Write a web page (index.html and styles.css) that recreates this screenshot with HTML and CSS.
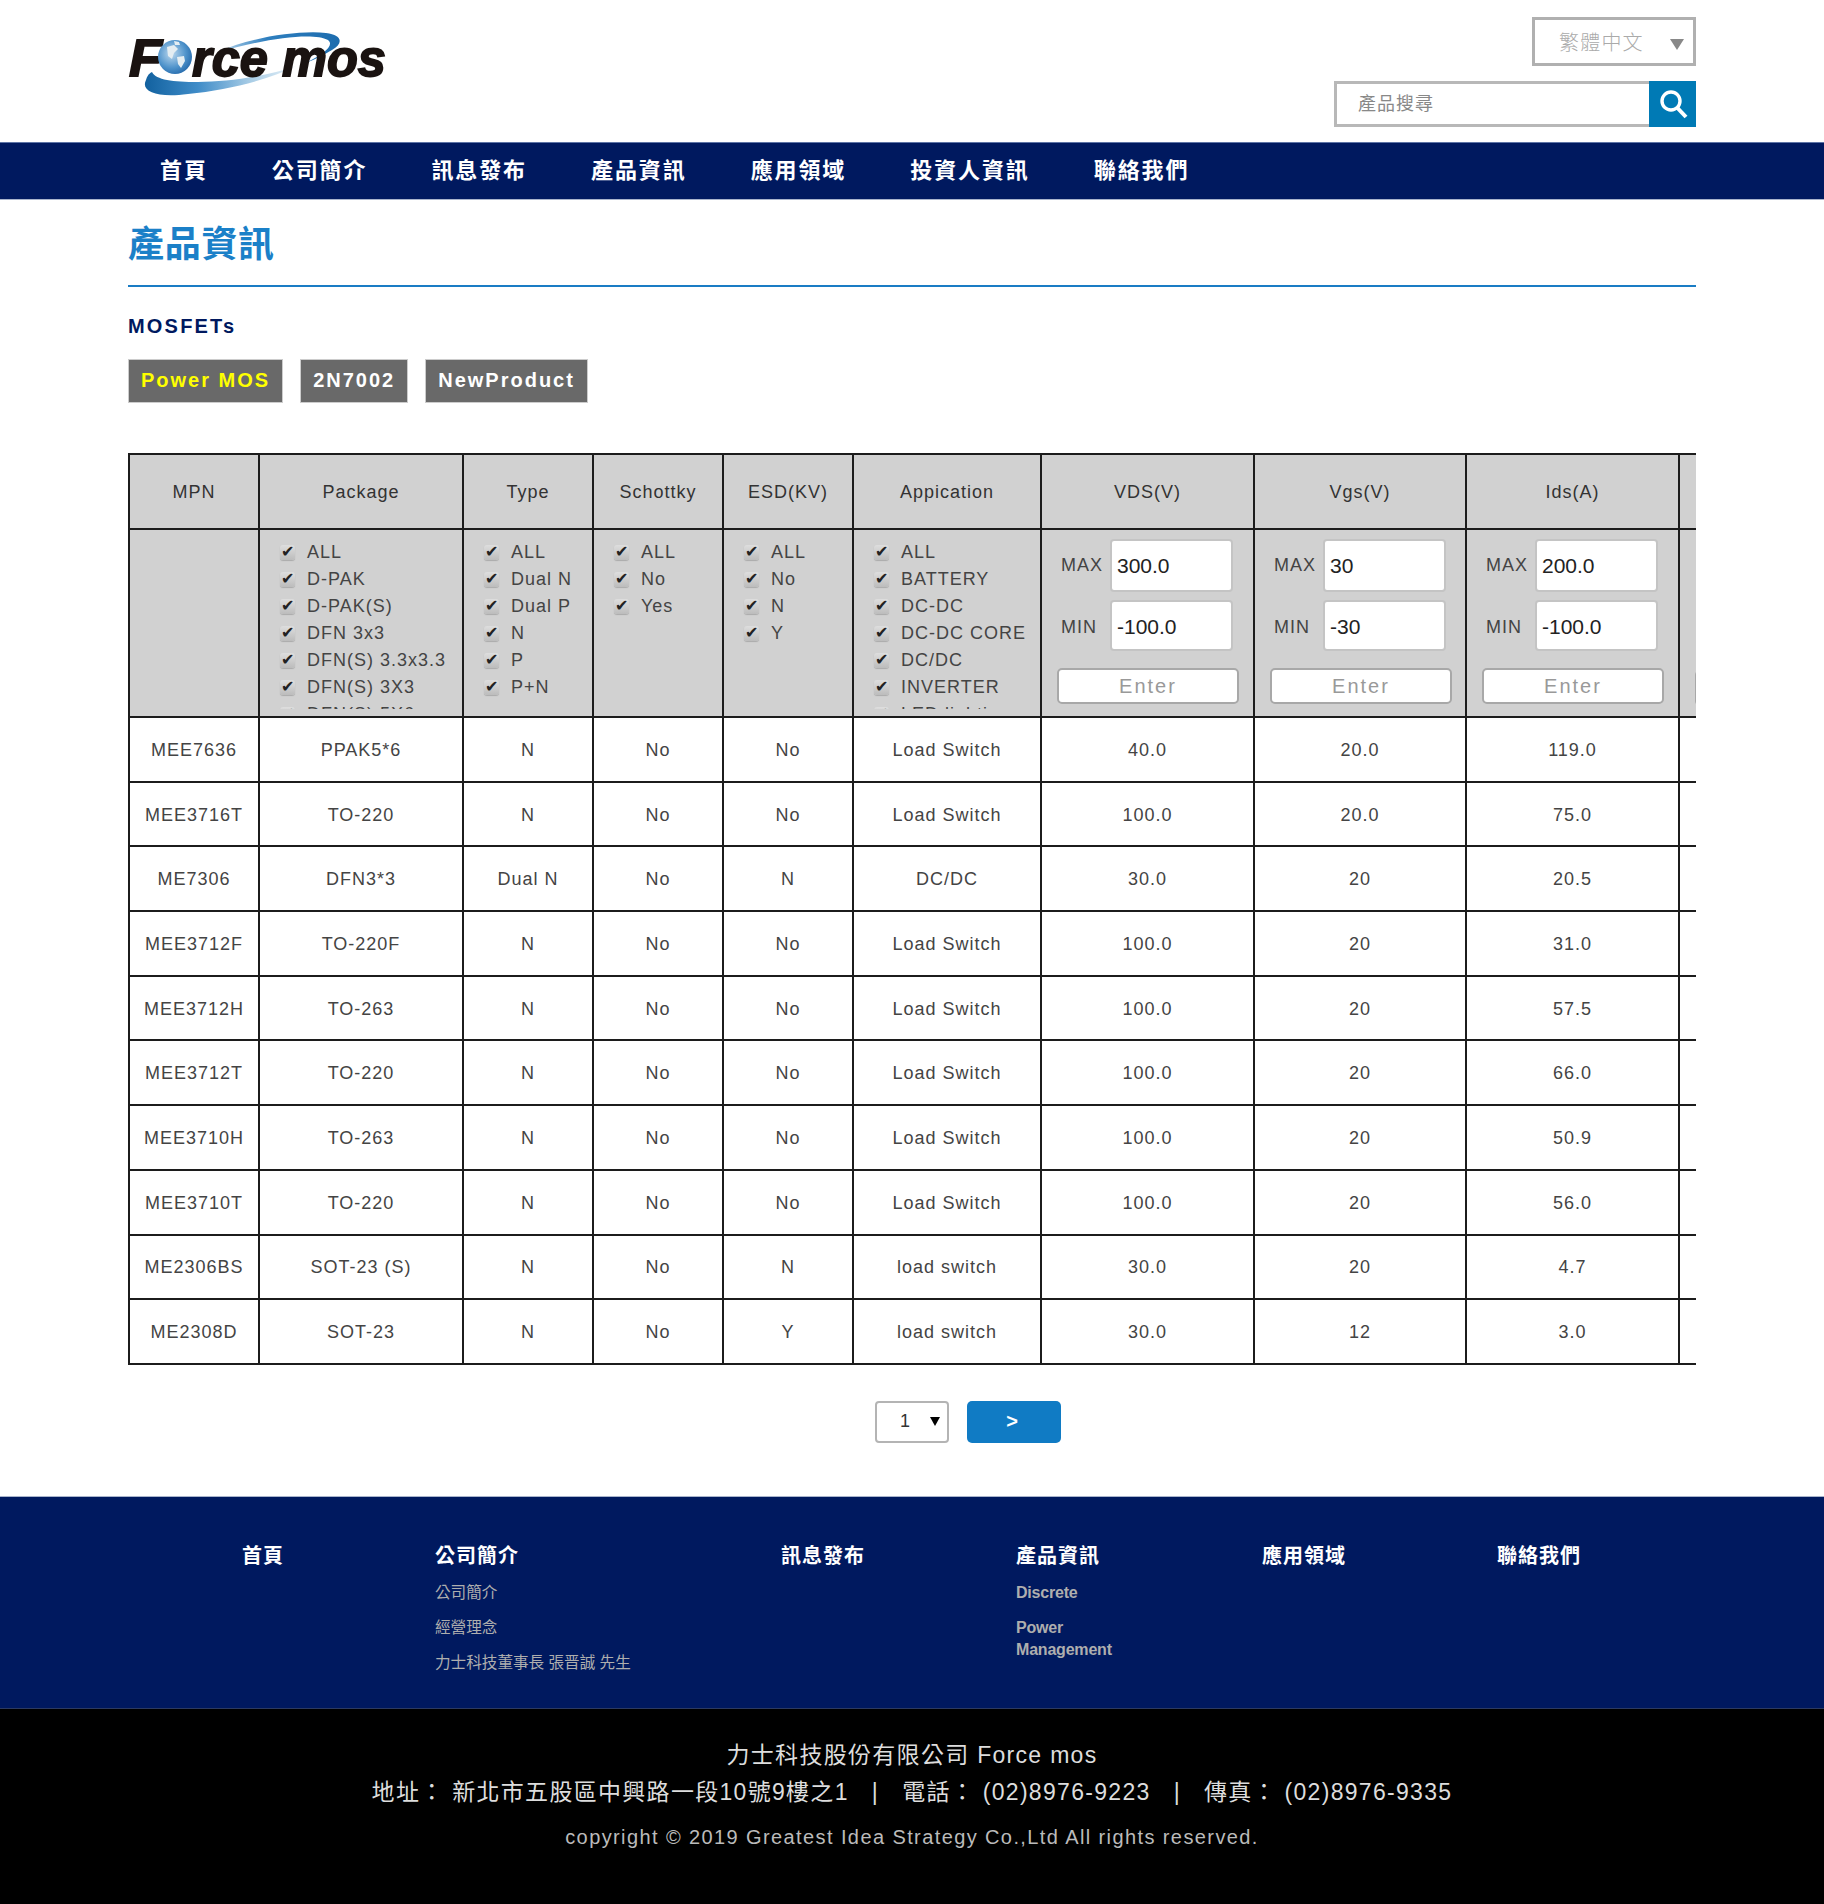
FILE: index.html
```html
<!DOCTYPE html>
<html lang="zh-Hant">
  <head>
    <meta charset="UTF-8" />
    <meta name="viewport" content="width=device-width, initial-scale=1.0" />
    <title>產品資訊 - Force mos</title>
    <link rel="stylesheet" href="styles.css">
  </head>
  <body>
    <header class="wrap top">
      <a class="logo" href="#">
        <svg width="268" height="72" viewBox="0 0 268 72" xmlns="http://www.w3.org/2000/svg">
          <defs>
            <linearGradient id="swoosh" x1="0" y1="0" x2="1" y2="0">
              <stop offset="0" stop-color="#12619f" />
              <stop offset="0.35" stop-color="#3f8cc8" />
              <stop offset="0.7" stop-color="#a9cde6" />
              <stop offset="1" stop-color="#e6f1f8" />
            </linearGradient>
            <linearGradient id="swooshTop" x1="0" y1="0" x2="1" y2="0">
              <stop offset="0" stop-color="#bcd8ec" />
              <stop offset="0.4" stop-color="#2f7fbf" />
              <stop offset="1" stop-color="#1c6cae" />
            </linearGradient>
            <radialGradient id="globe" cx="0.4" cy="0.4" r="0.7">
              <stop offset="0" stop-color="#bcd8ee" />
              <stop offset="0.6" stop-color="#4f93cb" />
              <stop offset="1" stop-color="#1e63a6" />
            </radialGradient>
          </defs>
          <path d="M18 50 C12 62 30 68 60 64 C100 60 140 50 168 36 C140 46 100 52 70 52 C45 52 28 50 24 42 C20 44 19 47 18 50 Z" fill="url(#swoosh)" />
          <path d="M90 22 C120 8 170 0 198 3 C214 5 216 13 204 20 C196 25 185 30 178 33 C195 24 207 16 200 10 C185 2 140 8 90 22 Z" fill="url(#swooshTop)" />
          <text class="logo-text" x="1" y="46" textLength="33" lengthAdjust="spacingAndGlyphs">F</text>
          <text class="logo-text" x="64" y="46" textLength="194" lengthAdjust="spacingAndGlyphs">rce mos</text>
          <circle cx="47" cy="27" r="17" fill="url(#globe)" />
          <path d="M39 17 l7 -2 4 4 -4 4 -2 6 -4 -3 z M49 27 l7 -1 1 5 -4 7 -3 -4 z M46 11 l5 1 1 3 -5 0 z" fill="#e4edf2" />
        </svg>
      </a>
      <div class="top-tools">
        <div class="lang-select">
          <span>繁體中文</span>
          <i class="lang-arrow"></i>
        </div>
        <form class="search">
          <input class="search-input" type="text" placeholder="產品搜尋" />
          <button class="search-btn" type="button" aria-label="search">
            <svg width="32" height="32" viewBox="0 0 32 32" xmlns="http://www.w3.org/2000/svg">
              <circle cx="14" cy="13" r="9" fill="none" stroke="#fff" stroke-width="3.4" />
              <path d="M20.5 20 L29 29" stroke="#fff" stroke-width="4" fill="none" />
            </svg>
          </button>
        </form>
      </div>
    </header>

    <nav class="main-nav">
      <div class="wrap nav-list">
        <a href="#">首頁</a>
        <a href="#">公司簡介</a>
        <a href="#">訊息發布</a>
        <a href="#">產品資訊</a>
        <a href="#">應用領域</a>
        <a href="#">投資人資訊</a>
        <a href="#">聯絡我們</a>
      </div>
    </nav>

    <main class="wrap">
      <h1 class="page-title">產品資訊</h1>
      <h2 class="sub-title">MOSFETs</h2>
      <div class="tabs">
        <a class="tab active" href="#">Power MOS</a>
        <a class="tab" href="#">2N7002</a>
        <a class="tab" href="#">NewProduct</a>
      </div>

      <div class="table-box">
        <table class="product-table">
          <colgroup>
            <col class="col-130" />
            <col class="col-204" />
            <col class="col-130" />
            <col class="col-130" />
            <col class="col-130" />
            <col class="col-188" />
            <col class="col-213" />
            <col class="col-212" />
            <col class="col-213" />
            <col class="col-213" />
          </colgroup>
          <thead>
            <tr class="head-row">
              <th>MPN</th>
              <th>Package</th>
              <th>Type</th>
              <th>Schottky</th>
              <th>ESD(KV)</th>
              <th>Appication</th>
              <th>VDS(V)</th>
              <th>Vgs(V)</th>
              <th>Ids(A)</th>
              <th></th>
            </tr>
            <tr class="filter-row">
              <th></th>
              <th>
                <div class="check-list">
                  <label><input type="checkbox" checked />ALL</label>
                  <label><input type="checkbox" checked />D-PAK</label>
                  <label><input type="checkbox" checked />D-PAK(S)</label>
                  <label><input type="checkbox" checked />DFN 3x3</label>
                  <label><input type="checkbox" checked />DFN(S) 3.3x3.3</label>
                  <label><input type="checkbox" checked />DFN(S) 3X3</label>
                  <label><input type="checkbox" checked />DFN(S) 5X6</label>
                </div>
              </th>
              <th>
                <div class="check-list">
                  <label><input type="checkbox" checked />ALL</label>
                  <label><input type="checkbox" checked />Dual N</label>
                  <label><input type="checkbox" checked />Dual P</label>
                  <label><input type="checkbox" checked />N</label>
                  <label><input type="checkbox" checked />P</label>
                  <label><input type="checkbox" checked />P+N</label>
                </div>
              </th>
              <th>
                <div class="check-list">
                  <label><input type="checkbox" checked />ALL</label>
                  <label><input type="checkbox" checked />No</label>
                  <label><input type="checkbox" checked />Yes</label>
                </div>
              </th>
              <th>
                <div class="check-list">
                  <label><input type="checkbox" checked />ALL</label>
                  <label><input type="checkbox" checked />No</label>
                  <label><input type="checkbox" checked />N</label>
                  <label><input type="checkbox" checked />Y</label>
                </div>
              </th>
              <th>
                <div class="check-list">
                  <label><input type="checkbox" checked />ALL</label>
                  <label><input type="checkbox" checked />BATTERY</label>
                  <label><input type="checkbox" checked />DC-DC</label>
                  <label><input type="checkbox" checked />DC-DC CORE</label>
                  <label><input type="checkbox" checked />DC/DC</label>
                  <label><input type="checkbox" checked />INVERTER</label>
                  <label><input type="checkbox" checked />LED lighting</label>
                </div>
              </th>
              <th>
                <div class="range">
                  <div class="range-row"><span>MAX</span><input class="max-input" type="text" value="300.0" /></div>
                  <div class="range-row min-row"><span>MIN</span><input class="min-input" type="text" value="-100.0" /></div>
                  <button class="enter-btn" type="button">Enter</button>
                </div>
              </th>
              <th>
                <div class="range">
                  <div class="range-row"><span>MAX</span><input class="max-input" type="text" value="30" /></div>
                  <div class="range-row min-row"><span>MIN</span><input class="min-input" type="text" value="-30" /></div>
                  <button class="enter-btn" type="button">Enter</button>
                </div>
              </th>
              <th>
                <div class="range">
                  <div class="range-row"><span>MAX</span><input class="max-input" type="text" value="200.0" /></div>
                  <div class="range-row min-row"><span>MIN</span><input class="min-input" type="text" value="-100.0" /></div>
                  <button class="enter-btn" type="button">Enter</button>
                </div>
              </th>
              <th>
                <div class="range">
                  <div class="range-row range-blank"></div>
                  <div class="range-row range-blank"></div>
                  <button class="enter-btn" type="button">Enter</button>
                </div>
              </th>
            </tr>
          </thead>
          <tbody>
            <tr><td>MEE7636</td><td>PPAK5*6</td><td>N</td><td>No</td><td>No</td><td>Load Switch</td><td>40.0</td><td>20.0</td><td>119.0</td><td></td></tr>
            <tr><td>MEE3716T</td><td>TO-220</td><td>N</td><td>No</td><td>No</td><td>Load Switch</td><td>100.0</td><td>20.0</td><td>75.0</td><td></td></tr>
            <tr><td>ME7306</td><td>DFN3*3</td><td>Dual N</td><td>No</td><td>N</td><td>DC/DC</td><td>30.0</td><td>20</td><td>20.5</td><td></td></tr>
            <tr><td>MEE3712F</td><td>TO-220F</td><td>N</td><td>No</td><td>No</td><td>Load Switch</td><td>100.0</td><td>20</td><td>31.0</td><td></td></tr>
            <tr><td>MEE3712H</td><td>TO-263</td><td>N</td><td>No</td><td>No</td><td>Load Switch</td><td>100.0</td><td>20</td><td>57.5</td><td></td></tr>
            <tr><td>MEE3712T</td><td>TO-220</td><td>N</td><td>No</td><td>No</td><td>Load Switch</td><td>100.0</td><td>20</td><td>66.0</td><td></td></tr>
            <tr><td>MEE3710H</td><td>TO-263</td><td>N</td><td>No</td><td>No</td><td>Load Switch</td><td>100.0</td><td>20</td><td>50.9</td><td></td></tr>
            <tr><td>MEE3710T</td><td>TO-220</td><td>N</td><td>No</td><td>No</td><td>Load Switch</td><td>100.0</td><td>20</td><td>56.0</td><td></td></tr>
            <tr><td>ME2306BS</td><td>SOT-23 (S)</td><td>N</td><td>No</td><td>N</td><td>load switch</td><td>30.0</td><td>20</td><td>4.7</td><td></td></tr>
            <tr><td>ME2308D</td><td>SOT-23</td><td>N</td><td>No</td><td>Y</td><td>load switch</td><td>30.0</td><td>12</td><td>3.0</td><td></td></tr>
          </tbody>
        </table>
      </div>

      <div class="pager">
        <div class="page-select">
          <span>1</span>
          <i class="page-arrow"></i>
        </div>
        <button class="page-next" type="button">&gt;</button>
      </div>
    </main>

    <footer>
      <div class="foot-nav">
        <div class="foot-col">
          <h3>首頁</h3>
        </div>
        <div class="foot-col">
          <h3>公司簡介</h3>
          <a href="#">公司簡介</a>
          <a href="#">經營理念</a>
          <a href="#">力士科技董事長 張晋誠 先生</a>
        </div>
        <div class="foot-col">
          <h3>訊息發布</h3>
        </div>
        <div class="foot-col">
          <h3>產品資訊</h3>
          <a class="foot-en" href="#">Discrete</a>
          <a class="foot-en" href="#">Power<br />Management</a>
        </div>
        <div class="foot-col">
          <h3>應用領域</h3>
        </div>
        <div class="foot-col">
          <h3>聯絡我們</h3>
        </div>
      </div>
      <div class="foot-info">
        <p>力士科技股份有限公司 Force mos</p>
        <p>地址： 新北市五股區中興路一段10號9樓之1 &nbsp;&nbsp;|&nbsp;&nbsp; 電話： (02)8976-9223 &nbsp;&nbsp;|&nbsp;&nbsp; 傳真： (02)8976-9335</p>
        <p class="copyright">copyright © 2019 Greatest Idea Strategy Co.,Ltd All rights reserved.</p>
      </div>
    </footer>
  </body>
</html>
```
FILE: styles.css
```css
* {
  box-sizing: border-box;
}
body {
  margin: 0;
  background-color: #fff;
  font-family: "Liberation Sans", "Noto Sans CJK TC", sans-serif;
  color: #444;
}
a {
  color: inherit;
  text-decoration: none;
}
.wrap {
  width: 1568px;
  margin: 0 auto;
}

/* header */
.top {
  height: 142px;
  display: flex;
  justify-content: space-between;
  position: relative;
}
.logo {
  display: block;
  padding-top: 30px;
}
.logo-text {
  font-family: "Liberation Sans", sans-serif;
  font-size: 52px;
  font-weight: bold;
  font-style: italic;
  fill: #1a1311;
  stroke: #1a1311;
  stroke-width: 1.8px;
}
.top-tools {
  display: flex;
  flex-direction: column;
  align-items: flex-end;
  padding-top: 17px;
}
.lang-select {
  width: 164px;
  height: 49px;
  border: 3px solid #b0b0b0;
  display: flex;
  align-items: center;
  justify-content: space-between;
  padding: 0 9px 0 24px;
  color: #aaa;
  font-size: 20px;
  font-weight: 300;
  letter-spacing: 1.2px;
}
.lang-arrow {
  width: 0;
  height: 0;
  margin-top: 6px;
  border-left: 7px solid transparent;
  border-right: 7px solid transparent;
  border-top: 11px solid #888;
}
.search {
  display: flex;
  margin-top: 15px;
}
.search-input {
  width: 315px;
  height: 46px;
  border: 3px solid #b8b8b8;
  border-right: 0;
  padding: 0 0 0 21px;
  font-family: inherit;
  font-size: 18px;
  letter-spacing: 1px;
  outline: none;
}
.search-input::placeholder {
  color: #888;
  opacity: 1;
}
.search-btn {
  width: 47px;
  height: 46px;
  border: 0;
  padding: 0;
  background-color: #007ab5;
  display: flex;
  align-items: center;
  justify-content: center;
}

/* nav */
.main-nav {
  height: 58px;
  background-color: #00195f;
  border-top: 1px solid #5e74a6;
  border-bottom: 1px solid #a9b4cc;
}
.nav-list {
  display: flex;
  height: 100%;
}
.nav-list a {
  padding: 0 32px;
  line-height: 56px;
  color: #fff;
  font-size: 22px;
  font-weight: bold;
  letter-spacing: 1.9px;
}

/* title */
.page-title {
  margin: 20px 0 0;
  padding-bottom: 15px;
  border-bottom: 2px solid #1a7cc4;
  line-height: 50px;
  font-size: 36px;
  font-weight: bold;
  color: #1b80c8;
  letter-spacing: 0.7px;
}
.sub-title {
  margin: 27px 0 0;
  line-height: 24px;
  font-size: 20px;
  font-weight: bold;
  letter-spacing: 2.2px;
  color: #00195f;
}
.tabs {
  display: flex;
  gap: 17px;
  margin-top: 21px;
}
.tab {
  height: 44px;
  padding: 0 12px 0 12px;
  border: 1px solid #ccc;
  background-color: #696969;
  line-height: 40px;
  color: #fff;
  font-size: 20px;
  font-weight: bold;
  letter-spacing: 2px;
}
.tab.active {
  color: #ff0;
}

/* table */
.table-box {
  margin-top: 50px;
  width: 1568px;
  overflow: hidden;
}
.product-table {
  table-layout: fixed;
  border-collapse: collapse;
  width: 1753px;
  font-size: 18px;
  letter-spacing: 1px;
}
.col-130 {
  width: 130px;
}
.col-204 {
  width: 204px;
}
.col-188 {
  width: 188px;
}
.col-212 {
  width: 212px;
}
.col-213 {
  width: 213px;
}
.product-table th,
.product-table td {
  border: 2px solid #1c1c1c;
  padding: 0;
  text-align: center;
  font-weight: normal;
}
.product-table th {
  background-color: #d1d1d1;
  color: #333;
}
.head-row {
  height: 75px;
}
.head-row th {
  padding-top: 2px;
}
.filter-row {
  height: 188px;
}
.filter-row th {
  vertical-align: top;
  text-align: left;
}
.product-table tbody tr {
  height: 64.7px;
}
.product-table td {
  padding-top: 2px;
  color: #444;
}
.check-list {
  height: 170px;
  margin-top: 9px;
  padding-left: 20px;
  overflow: hidden;
}
.check-list label {
  display: flex;
  align-items: center;
  height: 27px;
  color: #444;
  white-space: nowrap;
}
.check-list input {
  appearance: none;
  width: 15px;
  height: 15px;
  margin: 0 12px 0 0;
  flex: none;
  position: relative;
  border-radius: 3px;
  background: linear-gradient(#dedede, #bcbcbc);
  box-shadow: 0 1px 1px #aaa;
}
.check-list input::after {
  content: "✔";
  position: absolute;
  left: 1px;
  top: -1px;
  font-family: "DejaVu Sans", sans-serif;
  font-size: 16px;
  line-height: 15px;
  letter-spacing: 0;
  color: #222;
}
.range {
  padding: 9px 14px 0 15px;
}
.range-row {
  display: flex;
  align-items: center;
  padding-left: 4px;
  margin-bottom: 8px;
  color: #444;
}
.range-row span {
  width: 49px;
}
.min-row span {
  padding-top: 4px;
}
.range-row input {
  width: 123px;
  border: 2px solid #c4c4c4;
  border-radius: 4px;
  padding: 0 5px;
  background-color: #fff;
  font-family: inherit;
  font-size: 21px;
  color: #222;
  outline: none;
}
.max-input {
  height: 53px;
}
.range-row .min-input {
  height: 51px;
  padding-top: 2px;
}
.range-blank {
  height: 53px;
}
.enter-btn {
  display: block;
  width: 182px;
  height: 36px;
  margin-top: 17px;
  padding: 0;
  border: 2px solid #a8a8a8;
  border-radius: 5px;
  background-color: #fff;
  font-family: inherit;
  font-size: 20px;
  letter-spacing: 2px;
  color: #999;
}

/* pager */
.pager {
  display: flex;
  justify-content: center;
  gap: 18px;
  margin-top: 36px;
  padding-left: 112px;
}
.page-select {
  width: 74px;
  height: 42px;
  border: 2px solid #b4b4b4;
  border-radius: 4px;
  display: flex;
  align-items: center;
  padding: 0 7px 0 23px;
  justify-content: space-between;
  font-size: 18px;
  color: #333;
}
.page-arrow {
  width: 0;
  height: 0;
  border-left: 5px solid transparent;
  border-right: 5px solid transparent;
  border-top: 9px solid #000;
}
.page-next {
  width: 94px;
  height: 42px;
  border: 0;
  border-radius: 5px;
  padding: 0 4px 0 0;
  background-color: #107bc4;
  color: #fff;
  font-family: inherit;
  font-size: 20px;
  font-weight: bold;
}

/* footer */
footer {
  margin-top: 53px;
}
.foot-nav {
  height: 213px;
  background-color: #00195f;
  border-top: 1px solid #a9b4cc;
  border-bottom: 1px solid #2c3a60;
  padding: 47px 0 0 242px;
  display: grid;
  grid-template-columns: 193px 346px 235px 246px 235px 200px;
}
.foot-col h3 {
  margin: 0 0 14px;
  line-height: 24px;
  font-size: 20px;
  font-weight: bold;
  letter-spacing: 1px;
  color: #fff;
}
.foot-col a {
  display: block;
  margin-bottom: 13px;
  line-height: 22px;
  font-size: 15.6px;
  color: #aeaeae;
}
.foot-col .foot-en {
  font-size: 16px;
  font-weight: bold;
  letter-spacing: -0.2px;
}
.foot-info {
  height: 195px;
  background-color: #000;
  padding-top: 28px;
  text-align: center;
  font-size: 23px;
  letter-spacing: 1.3px;
  color: #ddd;
}
.foot-info p {
  margin: 0;
  line-height: 37px;
}
.foot-info .copyright {
  margin-top: 8px;
  font-size: 20px;
  letter-spacing: 1.4px;
  color: #bbb;
}
```
